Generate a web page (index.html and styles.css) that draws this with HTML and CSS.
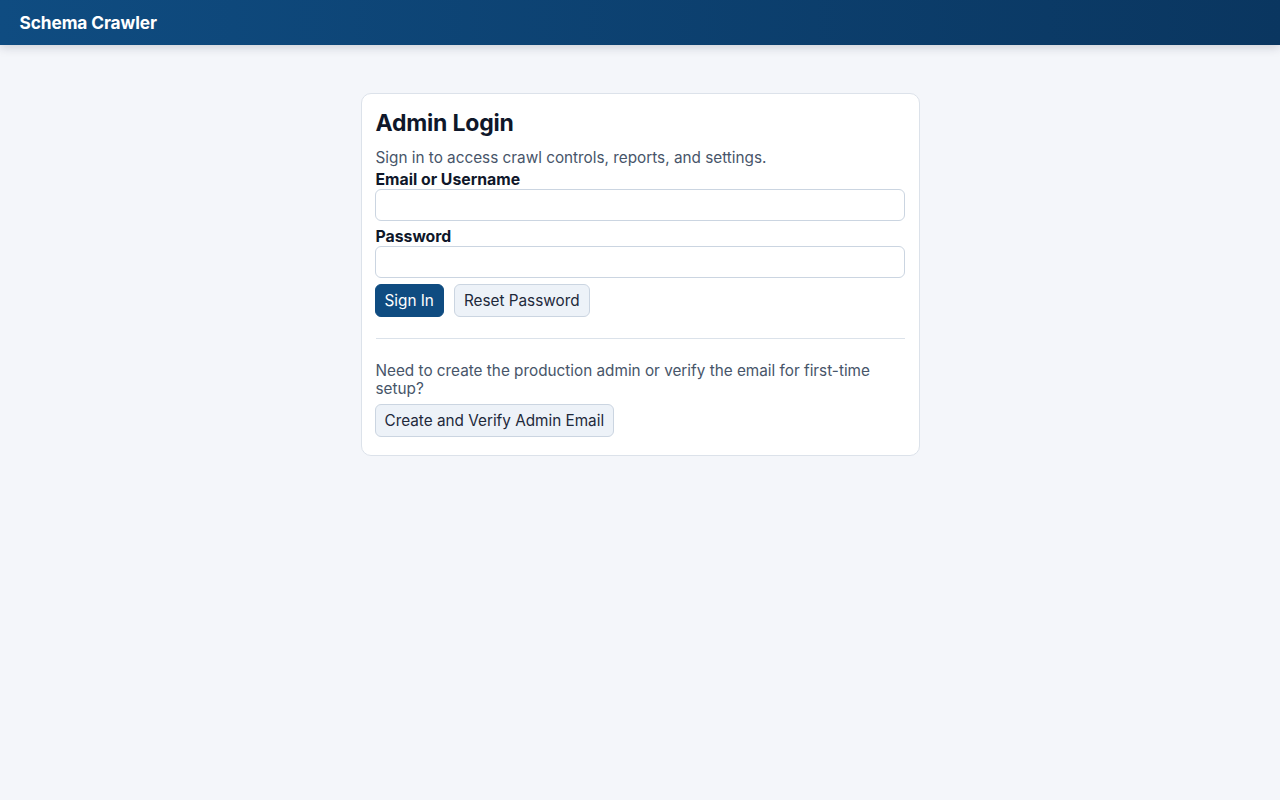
FILE: index.html
```html
<!DOCTYPE html>
<html lang="en">
<head>
    <meta charset="UTF-8">
    <meta name="viewport" content="width=device-width, initial-scale=1.0">
    <title>Schema Crawler - Admin Login</title>
    <link rel="stylesheet" href="styles.css">
</head>
<body>
    <header class="topbar">
        <div class="brand">Schema Crawler</div>
    </header>
    <main class="page">
        <section class="card">
            <h1>Admin Login</h1>
            <p class="muted">Sign in to access crawl controls, reports, and settings.</p>
            <form class="login-form" onsubmit="return false">
                <label for="user">Email or Username</label>
                <input id="user" type="text">
                <label for="pass">Password</label>
                <input id="pass" type="password">
                <div class="actions">
                    <button class="btn btn-primary" type="submit">Sign In</button>
                    <button class="btn" type="button">Reset Password</button>
                </div>
            </form>
            <hr class="divider">
            <p class="muted setup-text">Need to create the production admin or verify the email for first-time setup?</p>
            <button class="btn" type="button">Create and Verify Admin Email</button>
        </section>
    </main>
</body>
</html>
```

FILE: styles.css
```css
*{margin:0;padding:0;box-sizing:border-box;}
body{
    font-family: Inter, "Noto Sans", "Liberation Sans", sans-serif;
    background: #f4f6fa;
    color: #0f172a;
}
/* 顶部栏 */
.topbar{
    height: 45px;
    background: linear-gradient(90deg, #0f4c81, #0a3660);
    box-shadow: 0 2px 10px rgba(15, 23, 42, 0.18);
    display: flex;align-items: center;
    padding: 0 20px 0 19.5px;
}
.brand{
    color: #fff;font-weight: 700;font-size: 17.3px;
    letter-spacing: -0.1px;
}
/* 登录卡片 */
.page{
    padding-top: 48px;
    display: flex;justify-content: center;
}
.card{
    width: 559px;
    background: #fff;
    border: 1px solid #dce2ea;
    border-radius: 10px;
    padding: 15px 14px 18px;
}
.card h1{
    font-size: 23px;line-height: 29px;font-weight: 700;
    letter-spacing: -0.2px;
}
.muted{
    color: #475569;font-size: 15.3px;line-height: 18px;
}
.card h1 + .muted{
    margin-top: 11px;margin-bottom: 4px;
}
.login-form{
    display: flex;flex-direction: column;
}
.login-form label{
    font-weight: 700;font-size: 15.8px;line-height: 18px;
}
.login-form input{
    height: 32px;width: calc(100% + 1px);margin-left: -1px;
    border: 1px solid #cbd5e1;border-radius: 6px;
    font: inherit;padding: 0 8px;margin-bottom: 7px;
    background: #fff;
}
.actions{
    display: flex;gap: 10px;margin-top: -1px;margin-left: -1px;
}
.btn{
    height: 33px;padding: 0 9px;
    font: inherit;font-size: 15.3px;
    color: #1e293b;
    background: #edf2f8;
    border: 1px solid #cbd5e1;border-radius: 6px;
    cursor: pointer;
}
.btn-primary{
    background: #0f4c81;border-color: #0f4c81;color: #fff;
}
.card > .btn{
    margin-left: -1px;
}
.divider{
    border: 0;border-top: 1px solid #dbe2ea;
    margin: 21px 0 23px;
}
.setup-text{
    margin-bottom: 6px;
}
```
